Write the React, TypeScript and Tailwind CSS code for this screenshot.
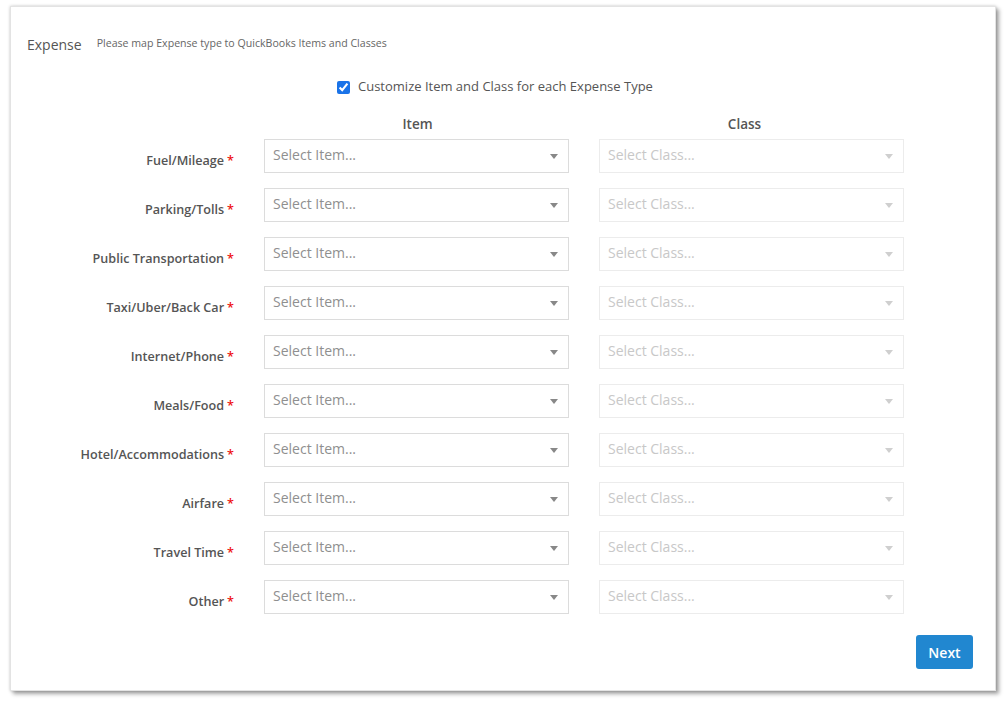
import React from "react";

const expenses = [
  "Fuel/Mileage",
  "Parking/Tolls",
  "Public Transportation",
  "Taxi/Uber/Back Car",
  "Internet/Phone",
  "Meals/Food",
  "Hotel/Accommodations",
  "Airfare",
  "Travel Time",
  "Other",
];

function Caret({ light }: { light?: boolean }) {
  return (
    <svg width="8" height="5" viewBox="0 0 8 5" className="shrink-0">
      <path d="M0 0 L8 0 L4 5 Z" fill={light ? "#cfcfcf" : "#888888"} />
    </svg>
  );
}

function SelectBox({ placeholder, disabled }: { placeholder: string; disabled?: boolean }) {
  return (
    <div
      className={
        disabled
          ? "w-[305px] h-[34px] flex items-center justify-between pl-[8px] pr-[10px] border border-[#ececec] bg-white text-[14px] text-[#c8c8c8]"
          : "w-[305px] h-[34px] flex items-center justify-between pl-[8px] pr-[10px] border border-[#dcdcdc] bg-white text-[14px] text-[#8f8f8f]"
      }
    >
      <span className="leading-none -mt-[3px]">{placeholder}</span>
      <Caret light={disabled} />
    </div>
  );
}

export default function App() {
  return (
    <div className="w-[1008px] h-[706px] bg-white pt-[6px] pl-[10px] font-['Open_Sans',sans-serif]">
      <div className="w-[986px] h-[685px] bg-white border border-[#e3e3e3] shadow-[0_0_3px_rgba(0,0,0,0.2),3px_3px_4px_rgba(0,0,0,0.35)] flex flex-col pt-[27px]">
        <div className="flex items-center pl-[16px] h-[20px]">
          <span className="text-[14px] text-[#555]">Expense</span>
          <span className="ml-[15px] text-[10.6px] text-[#666]">Please map Expense type to QuickBooks Items and Classes</span>
        </div>

        <div className="mt-[23px] h-[20px] flex items-center pl-[326px]">
          <input type="checkbox" defaultChecked className="w-[13px] h-[13px] accent-[#1a73e8] m-0" />
          <label className="ml-[8px] text-[13px] text-[#555]">Customize Item and Class for each Expense Type</label>
        </div>

        <div className="mt-[17px] h-[20px] flex text-[13.5px] font-semibold text-[#555]">
          <div className="w-[253px]" />
          <div className="w-[305px] text-center pl-[2px]">Item</div>
          <div className="w-[30px]" />
          <div className="w-[305px] text-center pr-[14px]">Class</div>
        </div>

        <div className="mt-[5px] flex flex-col gap-[15px]">
          {expenses.map((e) => (
            <div key={e} className="flex items-start">
              <div className="w-[223px] pt-[13px] text-right text-[12.6px] font-semibold text-[#555] leading-[18px]">
                {e}
                <span className="text-[#e11] ml-[3px]">*</span>
              </div>
              <div className="ml-[30px]">
                <SelectBox placeholder="Select Item..." />
              </div>
              <div className="ml-[30px]">
                <SelectBox placeholder="Select Class..." disabled />
              </div>
            </div>
          ))}
        </div>

        <div className="mt-[21px] flex justify-end pr-[22px]">
          <button className="w-[57px] h-[34px] rounded-[3px] bg-[#2187d0] text-white text-[14px] font-semibold">
            Next
          </button>
        </div>
      </div>
    </div>
  );
}
